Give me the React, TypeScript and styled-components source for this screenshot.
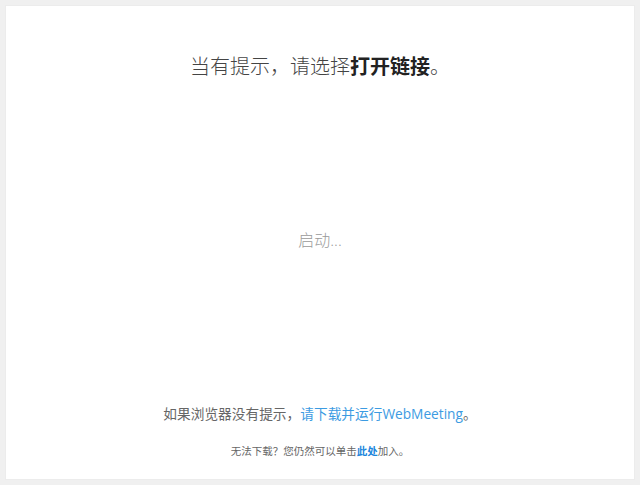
import styled, { createGlobalStyle } from "styled-components";

const GlobalStyle = createGlobalStyle`
  html, body {
    margin: 0;
    padding: 0;
    height: 100%;
    background: #f0f0f0;
  }
  #root {
    height: 100%;
  }
  * {
    box-sizing: border-box;
  }
`;

const Page = styled.div`
  height: 485px;
  padding: 5px;
  font-family: "Open Sans", "Noto Sans CJK SC", sans-serif;
`;

const Card = styled.div`
  display: flex;
  flex-direction: column;
  align-items: center;
  height: 100%;
  background: #ffffff;
  border: 1px solid #ececec;
`;

const Title = styled.h1`
  margin: 47px 0 0;
  font-size: 20px;
  line-height: 28px;
  font-weight: 300;
  color: #444;

  strong {
    font-weight: 700;
    color: #222;
  }
`;

const Status = styled.div`
  flex: 1;
  display: flex;
  align-items: center;
  justify-content: center;
  font-size: 16px;
  font-weight: 300;
  color: #9a9a9a;
  padding-bottom: 8px;
`;

const Hint = styled.p`
  margin: 0 0 19px;
  font-size: 13.7px;
  line-height: 20px;
  color: #666;
`;

const Small = styled.p`
  margin: 0 0 20px;
  font-size: 10.5px;
  line-height: 16px;
  color: #666;
`;

const Link = styled.a<{ $bold?: boolean }>`
  color: ${(p) => (p.$bold ? "#1b86dc" : "#3c9be2")};
  font-weight: ${(p) => (p.$bold ? 700 : 400)};
  text-decoration: none;
  cursor: pointer;
`;

export default function App() {
  return (
    <>
      <GlobalStyle />
      <Page>
        <Card>
          <Title>
            当有提示，请选择<strong>打开链接</strong>。
          </Title>
          <Status>启动...</Status>
          <Hint>
            如果浏览器没有提示，<Link>请下载并运行WebMeeting</Link>。
          </Hint>
          <Small>
            无法下载？您仍然可以单击<Link $bold>此处</Link>加入。
          </Small>
        </Card>
      </Page>
    </>
  );
}
